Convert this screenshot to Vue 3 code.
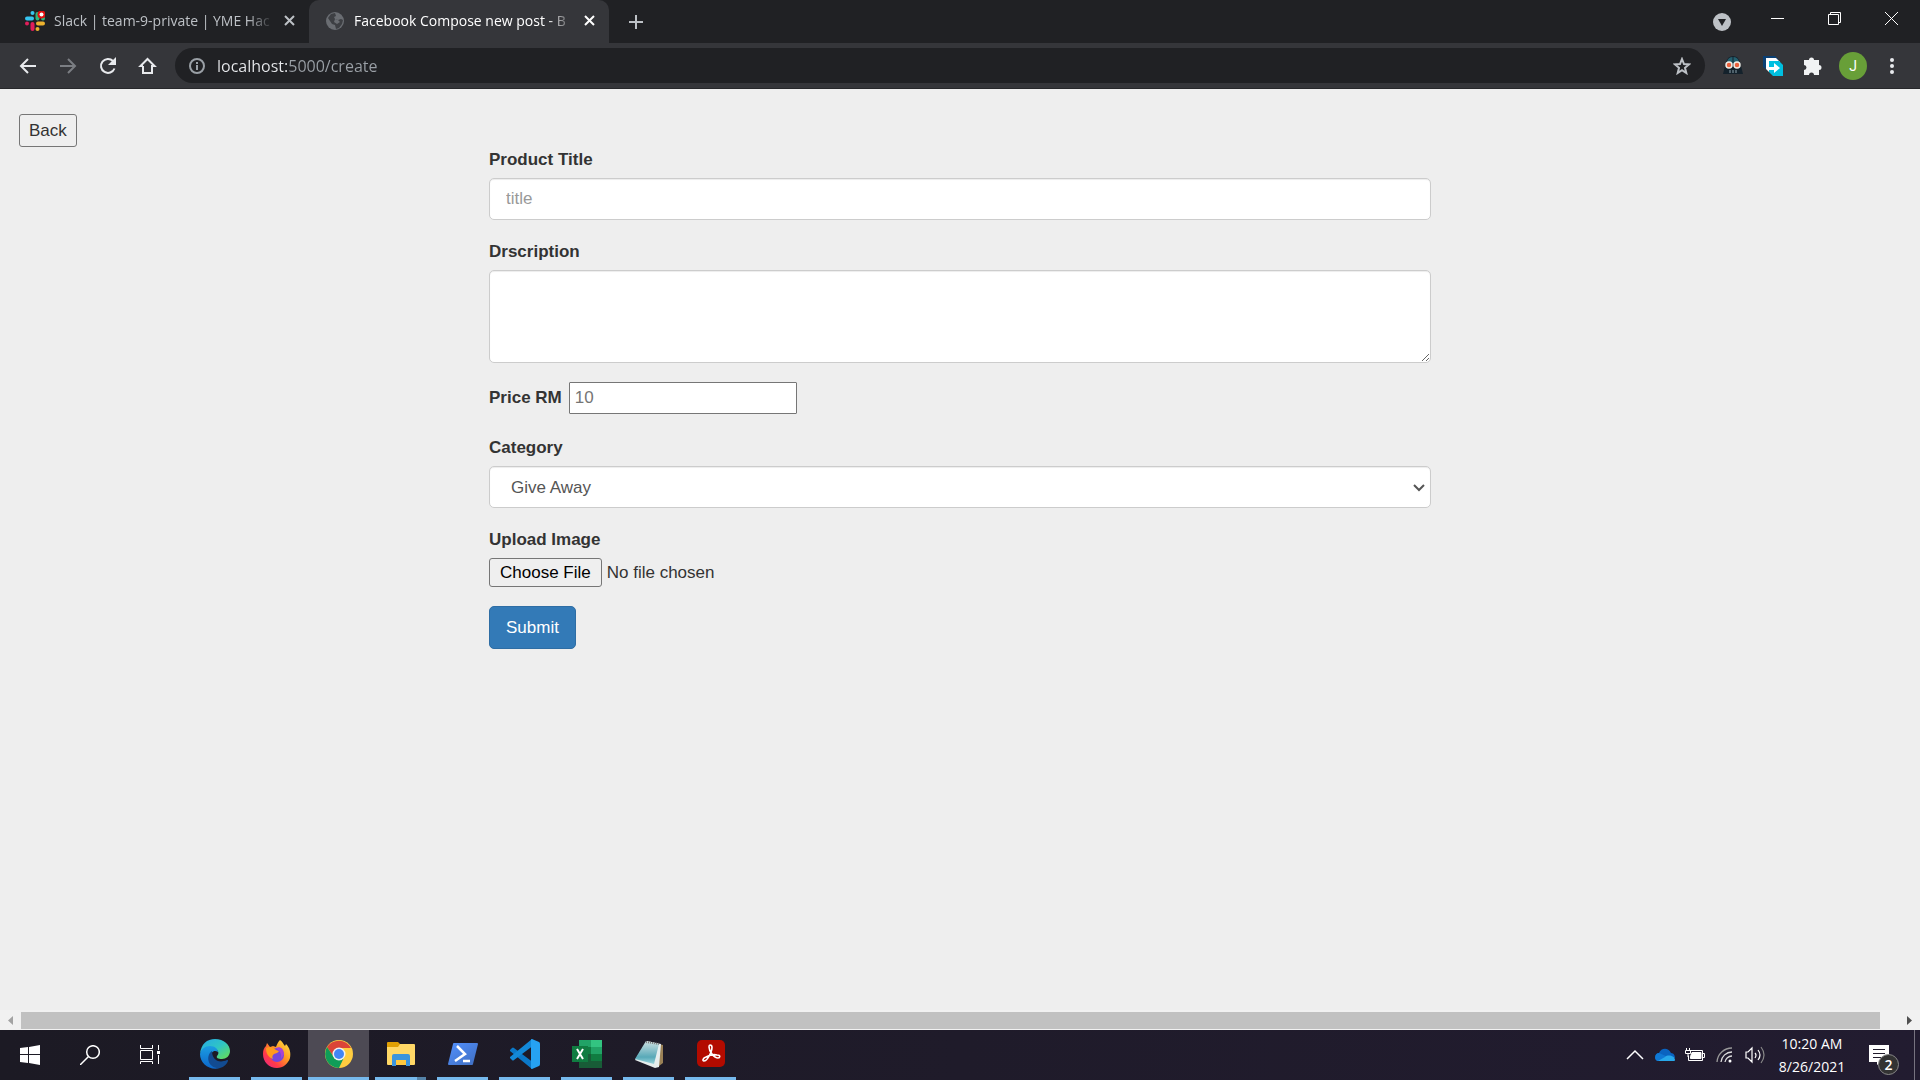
<template>
  <div class="desktop">
    <header class="browser">
      <div class="tab-strip">
        <div class="tab">
          <svg class="favicon" width="20" height="20" viewBox="0 0 20 20" aria-hidden="true">
            <g stroke-width="4" stroke-linecap="round" fill="none">
              <path d="M2 7.500h5" stroke="#36c5f0" />
              <path d="M7.500 2v0" stroke="#36c5f0" />
              <path d="M12.500 3v4.500" stroke="#2eb67d" />
              <path d="M18 7.500v0" stroke="#2eb67d" />
              <path d="M13 12.500h5" stroke="#ecb22e" />
              <path d="M12.500 18v0" stroke="#ecb22e" />
              <path d="M7.500 13v5" stroke="#e01e5a" />
              <path d="M2 12.500v0" stroke="#e01e5a" />
            </g>
            <circle cx="16.500" cy="3.500" r="4" fill="#e01010" />
            <circle cx="16.500" cy="3.500" r="2" fill="#fff" />
          </svg>
          <span class="tab-title">Slack | team-9-private | YME Hac</span>
          <button class="tab-close" type="button" aria-label="Close tab">
            <svg width="11" height="11" viewBox="0 0 11 11"><path d="M1 1l9 9M10 1l-9 9" stroke="currentColor" stroke-width="2" /></svg>
          </button>
        </div>
        <div class="tab active">
          <svg class="favicon" width="20" height="20" viewBox="0 0 20 20" aria-hidden="true">
            <circle cx="10" cy="10" r="9" fill="#6a6d72" />
            <path d="M3 7l3-4 4-1 1 3-2 1 1 2 3 1 3-1 2 1-1 4-3 4-3 1-1-4-3-1-2-3z" fill="#3d3f43" />
            <path d="M10 8l3 1 2 2-3 2-3-2z" fill="#6a6d72" />
          </svg>
          <span class="tab-title">Facebook Compose new post - B</span>
          <button class="tab-close" type="button" aria-label="Close tab">
            <svg width="11" height="11" viewBox="0 0 11 11"><path d="M1 1l9 9M10 1l-9 9" stroke="currentColor" stroke-width="2" /></svg>
          </button>
        </div>
        <button class="new-tab" type="button" aria-label="New tab">
          <svg width="16" height="16" viewBox="0 0 16 16"><path d="M8 1v14M1 8h14" stroke="currentColor" stroke-width="2" /></svg>
        </button>
        <div class="window-buttons">
          <button class="search-tabs" type="button" aria-label="Search tabs">
            <svg width="18" height="18" viewBox="0 0 18 18"><circle cx="9" cy="9" r="9" fill="#bdc1c6" /><path d="M5 6h8l-4 7z" fill="#202124" /></svg>
          </button>
          <button type="button" aria-label="Minimize">
            <svg width="13" height="13" viewBox="0 0 13 13"><path d="M0 6.500h13" stroke="#fff" /></svg>
          </button>
          <button type="button" aria-label="Restore">
            <svg width="13" height="13" viewBox="0 0 13 13" fill="none" stroke="#fff"><path d="M.5 2.500h10v10h-10zM2.500 2.500v-2h10v10h-2" /></svg>
          </button>
          <button type="button" aria-label="Close">
            <svg width="13" height="13" viewBox="0 0 13 13"><path d="M0 0l13 13M13 0L0 13" stroke="#fff" /></svg>
          </button>
        </div>
      </div>

      <div class="toolbar">
        <div class="nav-buttons">
          <button type="button" aria-label="Go back">
            <svg width="20" height="20" viewBox="0 0 20 20" fill="none" stroke="#e8eaed" stroke-width="2"><path d="M18 10H3M10 3l-7 7 7 7" /></svg>
          </button>
          <button type="button" aria-label="Go forward">
            <svg width="20" height="20" viewBox="0 0 20 20" fill="none" stroke="#7b7e83" stroke-width="2"><path d="M2 10h15M10 3l7 7-7 7" /></svg>
          </button>
          <button type="button" aria-label="Reload">
            <svg width="20" height="20" viewBox="0 0 20 20" fill="none"><path d="M16.500 12.500A7 7 0 1 1 15 5" stroke="#e8eaed" stroke-width="2" /><path d="M18 1v8h-8z" fill="#e8eaed" /></svg>
          </button>
          <button type="button" aria-label="Home">
            <svg width="20" height="20" viewBox="0 0 20 20" fill="none" stroke="#e8eaed" stroke-width="2"><path d="M5 10v7h9v-7h2.500l-7-7-7 7H5" /></svg>
          </button>
        </div>
        <div class="omnibox">
          <svg width="16" height="16" viewBox="0 0 16 16" fill="none" stroke="#9aa0a6" stroke-width="2"><circle cx="8" cy="8" r="7" /><path d="M8 7v5M8 4v2" /></svg>
          <input v-model="address" class="address" type="text" aria-label="Address">
          <button type="button" aria-label="Bookmark this page">
            <svg width="18" height="18" viewBox="0 0 18 18" fill="none" stroke="#bdc1c6" stroke-width="2"><path d="M9 2l2 5 5 .4-4 3.400 1.300 5.200L9 13.200 4.700 16 6 10.800 2 7.400 7 7z" /></svg>
          </button>
        </div>
        <div class="extensions">
          <button type="button" aria-label="Dark mode extension">
            <svg width="20" height="20" viewBox="0 0 20 20">
              <path d="M0 18l3-12Q5 0 10 0t7 6l3 12z" fill="#14222c" />
              <path d="M4 6Q5 1 10 1t6 5l-2 2H6z" fill="#24606f" />
              <path d="M10 0v9" stroke="#14222c" />
              <circle cx="6" cy="9" r="3" fill="#e8603c" stroke="#f2ede6" stroke-width="1.500" />
              <circle cx="14" cy="9" r="3" fill="#e8603c" stroke="#f2ede6" stroke-width="1.500" />
              <path d="M7 17v-3M10 17v-3M13 17v-3" stroke="#8aa0aa" />
            </svg>
          </button>
          <button type="button" aria-label="Share extension">
            <svg width="20" height="20" viewBox="0 0 20 20">
              <path d="M0 0h12l3 3v11H4L0 11z" fill="#0a3f73" />
              <path d="M3 2h10l4 4v10H6l-3-3z" fill="#fff" />
              <path d="M6 5h10l4 4v11H10l-4-4z" fill="#00bfe0" />
              <path d="M5 11h6V7l6 5-6 5v-3H5z" fill="#fff" />
            </svg>
          </button>
          <button type="button" aria-label="Extensions">
            <svg width="20" height="20" viewBox="0 0 20 20"><path d="M1 4h5a2.500 2.500 0 1 1 5 0h5v5a2.500 2.500 0 1 1 0 5v5h-5a2.500 2.500 0 0 0-5 0H1v-5a2.500 2.500 0 0 0 0-5z" fill="#f1f3f4" /></svg>
          </button>
          <button class="avatar" type="button">J</button>
          <button class="more" type="button" aria-label="Menu">
            <svg width="4" height="18" viewBox="0 0 4 18" fill="#e8eaed"><circle cx="2" cy="3" r="2" /><circle cx="2" cy="9" r="2" /><circle cx="2" cy="15" r="2" /></svg>
          </button>
        </div>
      </div>
    </header>

    <main class="page">
      <button class="back" type="button">Back</button>
      <form class="post-form" @submit.prevent>
        <div class="form-group">
          <label for="title">Product Title</label>
          <input id="title" v-model="form.title" class="form-control" type="text" placeholder="title">
        </div>
        <div class="form-group">
          <label for="description">Drscription</label>
          <textarea id="description" v-model="form.description" class="form-control"></textarea>
        </div>
        <div class="form-group price">
          <label for="price">Price RM</label>
          <input id="price" v-model="form.price" type="text" placeholder="10">
        </div>
        <div class="form-group">
          <label for="category">Category</label>
          <div class="select-wrap">
            <select id="category" v-model="form.category" class="form-control">
              <option v-for="c in categories" :key="c">{{ c }}</option>
            </select>
            <svg class="caret" width="12" height="8" viewBox="0 0 12 8" fill="none" aria-hidden="true"><path d="M1 1l5 5 5-5" stroke="#555" stroke-width="2" /></svg>
          </div>
        </div>
        <div class="form-group">
          <label for="image">Upload Image</label>
          <input id="image" class="file" type="file">
        </div>
        <button class="submit" type="submit">Submit</button>
      </form>
    </main>

    <div class="scrollbar" aria-hidden="true">
      <svg width="21" height="20" viewBox="0 0 21 20"><path d="M13 6v9l-5-4.500z" fill="#a3a3a3" /></svg>
      <div class="track"><div class="thumb" :style="{ width: thumbWidth + '%' }"></div></div>
      <svg width="21" height="20" viewBox="0 0 21 20"><path d="M8 6v9l5-4.500z" fill="#505050" /></svg>
    </div>

    <footer class="taskbar">
      <button class="system" type="button" aria-label="Start">
        <svg width="20" height="20" viewBox="0 0 20 20" fill="#fff"><path d="M0 3l8-1v7H0zM9 2l11-2v9H9zM0 10h8v8l-8-1zM9 10h11v10L9 18z" /></svg>
      </button>
      <button class="system" type="button" aria-label="Search">
        <svg width="20" height="20" viewBox="0 0 20 20" fill="none" stroke="#fff" stroke-width="1.500"><circle cx="13" cy="7" r="6.300" /><path d="M8.500 11.500L0 20" /></svg>
      </button>
      <button class="system" type="button" aria-label="Task View">
        <svg width="20" height="20" viewBox="0 0 20 20" fill="none" stroke="#fff"><path d="M.5 0v3.500h12V0M.5 5.500h12v9H.5zM.5 19v-2.500h12V19M18.500 0v5M18.500 10v9" /><path d="M17 6h3v3h-3z" fill="#fff" stroke="none" /></svg>
      </button>

      <div class="apps">
        <button class="app" type="button" aria-label="Microsoft Edge">
          <svg width="30" height="30" viewBox="0 0 30 30">
            <defs>
              <linearGradient id="edgeTop" x1="0" y1="0" x2="1" y2="1"><stop offset="0" stop-color="#26a9e8" /><stop offset=".5" stop-color="#2fc5c4" /><stop offset="1" stop-color="#6be04c" /></linearGradient>
              <linearGradient id="edgeLeft" x1="0" y1="0" x2="0" y2="1"><stop offset="0" stop-color="#1b9de2" /><stop offset="1" stop-color="#0d66c9" /></linearGradient>
            </defs>
            <path d="M0 15C1 5 7 0 15 0c9 0 15 6 15 12 0 5-4 8-8 8-4 0-6-1-5-3 3-3 1-7-4-8C6 8 1 11 0 15z" fill="url(#edgeTop)" />
            <path d="M0 15C1 10 5 7 10 7c5 0 8 3 8 6-5-3-8 2-7 6 1 6 5 9 9 10C10 32 0 25 0 15z" fill="url(#edgeLeft)" />
            <path d="M12 12c-7 5-4 18 8 17 4-1 7-4 8-7 0-1 0-1-1-1-9 4-15-1-15-9z" fill="#124b91" />
          </svg>
        </button>
        <button class="app" type="button" aria-label="Firefox">
          <svg width="30" height="30" viewBox="0 0 30 30">
            <defs>
              <linearGradient id="fox" x1="1" y1="0" x2="0" y2="1"><stop offset="0" stop-color="#fff04a" /><stop offset=".4" stop-color="#ff9a22" /><stop offset=".7" stop-color="#ff3a48" /><stop offset="1" stop-color="#e5228f" /></linearGradient>
            </defs>
            <path d="M18 1c3 2 3 4 5 6l1-2c4 4 5 9 4 14-2 6-7 10-13 10C7 29 1 23 1 15c0-4 1-6 3-8l1-3 3 4 3-1 3 1c1-3 2-5 4-7z" fill="url(#fox)" />
            <circle cx="15" cy="16" r="7" fill="#7446db" />
            <path d="M4 9c4-2 7-1 10 2l3 1c-1 2-3 2-5 3-2 2-2 3-1 5-5-2-7-6-7-11z" fill="#ff9a1c" />
            <path d="M14 9c4-2 8 1 8 6l-3 5c1-5-1-8-5-11z" fill="#a743d6" />
          </svg>
        </button>
        <button class="app current" type="button" aria-label="Google Chrome">
          <svg width="28" height="28" viewBox="0 0 28 28">
            <circle cx="14" cy="14" r="14" fill="#ffcd40" />
            <path d="M2 7a14 14 0 0 1 24 1H14a6 6 0 0 0-5.200 9z" fill="#db4437" />
            <path d="M2 7l6.800 10a6 6 0 0 0 10.400 0L14 28A14 14 0 0 1 2 7z" fill="#0f9d58" />
            <circle cx="14" cy="14" r="6.500" fill="#f1f1f1" />
            <circle cx="14" cy="14" r="5" fill="#4285f4" />
          </svg>
        </button>
        <button class="app stacked" type="button" aria-label="File Explorer">
          <svg width="28" height="24" viewBox="0 0 28 24">
            <path d="M0 1q0-1 1-1h10l2 2v4H0z" fill="#e0a004" />
            <path d="M0 5h11l2-3h14q1 0 1 1v19q0 1-1 1H1q-1 0-1-1z" fill="#ffd866" />
            <path d="M9 17h10v6H9z" fill="#ffc73d" />
            <path d="M5 24V14q0-2 2-2h14q2 0 2 2v10h-4v-6H9v6z" fill="#3b94dd" />
          </svg>
        </button>
        <button class="app" type="button" aria-label="PowerShell">
          <svg width="30" height="24" viewBox="0 0 30 24">
            <defs><linearGradient id="shell" x1="0" y1="0" x2="1" y2="1"><stop offset="0" stop-color="#5391fe" /><stop offset="1" stop-color="#3e6dbf" /></linearGradient></defs>
            <path d="M6 1h23q1 0 1 1l-5 20q0 1-1 1H1q-1 0-1-1L5 2q0-1 1-1z" fill="url(#shell)" />
            <path d="M9 4l8 8-10 7M15 19h7" fill="none" stroke="#fff" stroke-width="2.500" />
          </svg>
        </button>
        <button class="app" type="button" aria-label="Visual Studio Code">
          <svg width="30" height="30" viewBox="0 0 30 30">
            <path d="M0 11l2-2q1-1 2 0l20 15-2 6L0 12z" fill="#0b78c8" />
            <path d="M0 19l2 2q1 1 2 0L24 6l-2-6L0 18z" fill="#1389d8" />
            <path d="M22 0l7 3q1 .5 1 2v20q0 1.500-1 2l-7 3q-1 0-1-1V1q0-1 1-1z" fill="#26a2f2" />
          </svg>
        </button>
        <button class="app" type="button" aria-label="Excel">
          <svg width="30" height="28" viewBox="0 0 30 28">
            <path d="M7 0h12v7H7z" fill="#21a366" /><path d="M19 0h11v7H19z" fill="#33c481" />
            <path d="M7 7h12v7H7z" fill="#107c41" /><path d="M19 7h11v7H19z" fill="#21a366" />
            <path d="M7 14h23v7H7z" fill="#107c41" /><path d="M7 14h12v14H7zM19 21h11v7H19z" fill="#185c37" />
            <path d="M0 6h16v16H0z" fill="#107c41" />
            <path d="M5 9l6 10M11 9L5 19" stroke="#fff" stroke-width="2" />
          </svg>
        </button>
        <button class="app" type="button" aria-label="Notepad">
          <svg width="28" height="28" viewBox="0 0 28 28">
            <defs><linearGradient id="pad" x1="0" y1="0" x2="0" y2="1"><stop offset="0" stop-color="#cde0e2" /><stop offset=".7" stop-color="#58a9b8" /><stop offset="1" stop-color="#9cd6df" /></linearGradient></defs>
            <path d="M24 4l4 1v18l-4 3z" fill="#9a8156" />
            <path d="M12 1l14 3-2 23-4 1L0 20z" fill="#e6eeee" />
            <path d="M11 1l13 3-5 20L0 19z" fill="url(#pad)" />
            <path d="M11 2l13 2" stroke="#777" stroke-width="2" stroke-dasharray="1 1" />
          </svg>
        </button>
        <button class="app" type="button" aria-label="Adobe Acrobat">
          <svg width="28" height="28" viewBox="0 0 28 28">
            <rect width="28" height="27" rx="5" fill="#b30b00" />
            <path d="M13 5c3 0 2 4 1 7-2 5-4 9-7 9-2 0-1-3 2-4 4-2 8-3 11-2 4 0 3 3 1 3-4 0-9-7-9-11 0-1 0-2 1-2z" fill="none" stroke="#fff" stroke-width="1.600" />
          </svg>
        </button>
      </div>

      <div class="tray">
        <button type="button" aria-label="Show hidden icons">
          <svg width="20" height="20" viewBox="0 0 20 20" fill="none" stroke="#fff" stroke-width="1.500"><path d="M2 14l8-8 8 8" /></svg>
        </button>
        <button type="button" aria-label="OneDrive">
          <svg width="20" height="20" viewBox="0 0 20 20"><path d="M1 15c-2-4 0-7 3-7 2-5 9-6 12 0 3 0 4 3 4 5z" fill="#0a63c0" /><path d="M2 16c-4-3-1-8 2-8l9 4-8 4z" fill="#0f78d4" /><path d="M3 16l7-4c3-3 10-1 10 3 0 1-1 1-2 1z" fill="#28a8ea" /></svg>
        </button>
        <button type="button" aria-label="Battery">
          <svg width="20" height="20" viewBox="0 0 20 20" fill="none" stroke="#fff"><path d="M5 5.500h12.500v10h-14v-5M18 8.500h1.500v4H18M1.500 3v2M4.500 3v2M.5 5.500h5v3h-5zM3 8v4" /><path d="M7 7.500h9v6H5.500v-2z" fill="#fff" /></svg>
        </button>
        <button type="button" aria-label="Network">
          <svg width="20" height="20" viewBox="0 0 20 20" fill="none" stroke="#ddd" stroke-width="1.300"><path d="M2 17A15 15 0 0 1 17 3" stroke="#999" /><path d="M6 17A11 11 0 0 1 17 7M10 17a7 7 0 0 1 7-6" /><circle cx="15" cy="16" r="1.500" fill="#fff" stroke="none" /></svg>
        </button>
        <button type="button" aria-label="Volume">
          <svg width="20" height="20" viewBox="0 0 20 20" fill="none" stroke="#fff" stroke-width="1.200"><path d="M1 7h2l4-4v14l-4-4H1zM10 8q2 2 0 5M13 5q4 5 0 10" /><path d="M16 2q6 8 0 16" stroke="#888" /></svg>
        </button>
        <div class="clock">
          <span>10:20 AM</span>
          <span>8/26/2021</span>
        </div>
        <button class="notifications" type="button" aria-label="Notifications">
          <svg width="20" height="20" viewBox="0 0 20 20"><path d="M0 0h20v17h-8l-4 3v-3H0z" fill="#fff" /><path d="M4 4.500h12M4 8.500h12M4 12.500h8" stroke="#211c2c" /></svg>
          <span class="badge">2</span>
        </button>
        <button class="show-desktop" type="button" aria-label="Show desktop"></button>
      </div>
    </footer>
  </div>
</template>

<script setup>
import { ref, reactive } from 'vue'

const address = ref('localhost:5000/create')
const categories = ['Give Away', 'Sell']
const thumbWidth = ref(99)

const form = reactive({
  title: '',
  description: '',
  price: '',
  category: 'Give Away'
})
</script>

<style>
body {
  margin: 0;
}
</style>

<style scoped>
* {
  box-sizing: border-box;
}

.desktop {
  display: flex;
  flex-direction: column;
  min-height: 100vh;
  background: #eee;
  font-family: "Open Sans", "Noto Sans", sans-serif;
}

.browser button,
.taskbar button {
  display: flex;
  align-items: center;
  justify-content: center;
  padding: 0;
  border: 0;
  background: none;
  color: inherit;
  font: inherit;
}

/* tabs */
.tab-strip {
  display: flex;
  height: 43px;
  padding-left: 9px;
  background: #202124;
  color: #bdc1c6;
}

.tab {
  display: flex;
  align-items: center;
  width: 300px;
  padding: 0 14px 2px 16px;
  font-size: 14px;
}

.tab.active {
  background: #35363a;
  border-radius: 10px 10px 0 0;
  color: #fff;
}

.favicon {
  flex: none;
  margin-right: 9px;
}

.tab-title {
  flex: 1;
  white-space: nowrap;
  mask-image: linear-gradient(to right, #000 88%, transparent);
}

.tab-close {
  flex: none;
  width: 11px;
  margin-left: 10px;
}

.new-tab {
  width: 54px;
}

.window-buttons {
  display: flex;
  margin-left: auto;
}

.window-buttons button {
  width: 57px;
  height: 37px;
}

.window-buttons .search-tabs {
  width: 54px;
  height: 43px;
}

/* toolbar */
.toolbar {
  display: flex;
  align-items: center;
  height: 46px;
  padding-right: 20px;
  border-bottom: 1px solid #27282b;
  background: #35363a;
}

.nav-buttons {
  display: flex;
  padding: 0 7px 0 8px;
}

.nav-buttons button {
  width: 40px;
  height: 36px;
}

.omnibox {
  display: flex;
  flex: 1;
  align-items: center;
  height: 35px;
  padding: 0 14px;
  border-radius: 18px;
  background: #202124;
}

.address {
  flex: 1;
  margin: 0 12px;
  padding: 0;
  border: 0;
  outline: 0;
  background: linear-gradient(to right, #e8eaed 71px, #9aa0a6 71px);
  background-clip: text;
  color: transparent;
  font-family: inherit;
  font-size: 16px;
  line-height: 24px;
}

.extensions {
  display: flex;
  align-items: center;
  gap: 20px;
  padding-left: 18px;
}

.browser .avatar {
  width: 28px;
  height: 28px;
  margin: 0 -3px 0 -4px;
  border-radius: 50%;
  background: #689f38;
  color: #fff;
  font-family: Roboto, sans-serif;
  font-size: 14px;
}

.more {
  width: 16px;
}

/* page */
.page {
  flex: 1;
  padding: 25px 19px;
  color: #333;
  font-family: "Liberation Sans", Arial, sans-serif;
  font-size: 17px;
  line-height: 25px;
}

.page button,
.page input,
.page select,
.page textarea {
  font-family: inherit;
  font-size: inherit;
  line-height: inherit;
}

.back {
  display: block;
  padding: 3px 9px;
  border: 1px solid #767676;
  border-radius: 3px;
  background: #efefef;
  color: #333;
}

.post-form {
  width: 100%;
  max-width: 942px;
  margin: 0 auto;
}

.form-group {
  margin-bottom: 19px;
}

label {
  display: inline-block;
  margin-bottom: 6px;
  font-weight: bold;
}

.form-control {
  display: block;
  width: 100%;
  height: 42px;
  padding: 7px 16px;
  border: 1px solid #ccc;
  border-radius: 5px;
  background: #fff;
  box-shadow: inset 0 1px 1px rgba(0, 0, 0, 0.075);
  color: #555;
}

.form-control::placeholder {
  color: #999;
}

textarea.form-control {
  height: 93px;
}

.price label {
  margin-right: 7px;
}

.price input {
  width: 228px;
  height: 32px;
  padding: 2px 5px;
  border: 1px solid #767676;
  border-radius: 1px;
}

.select-wrap {
  position: relative;
}

select.form-control {
  padding-left: 21px;
  appearance: none;
}

.caret {
  position: absolute;
  top: 18px;
  right: 6px;
  pointer-events: none;
}

.file {
  display: block;
  height: 29px;
}

.file::file-selector-button {
  height: 29px;
  margin-right: 5px;
  padding: 0 10px;
  border: 1px solid #767676;
  border-radius: 3px;
  background: #efefef;
  color: #000;
  font-family: inherit;
  font-size: inherit;
}

.submit {
  padding: 8px 16px;
  border: 1px solid #2e6da4;
  border-radius: 5px;
  background: #337ab7;
  color: #fff;
}

/* horizontal scrollbar */
.scrollbar {
  display: flex;
  height: 20px;
  background: #f1f1f1;
}

.track {
  flex: 1;
  padding: 2px 0 1px;
}

.thumb {
  height: 17px;
  background: #c1c1c1;
}

/* taskbar */
.taskbar {
  display: flex;
  height: 50px;
  background: linear-gradient(to right, #1c1a24, #221c30);
  color: #fff;
}

.system {
  width: 60px;
}

.apps {
  display: flex;
  gap: 11px;
  padding-left: 9px;
}

.taskbar .app {
  width: 51px;
  border-bottom: 3px solid #76b9ed;
}

.taskbar .app.current {
  width: 61px;
  margin: 0 -5px;
  background: #4d4a54;
}

.taskbar .app.stacked {
  border-image: linear-gradient(to right, #76b9ed 40px, #5583a8 40px) 3;
}

.tray {
  display: flex;
  align-items: center;
  margin-left: auto;
}

.tray button {
  width: 30px;
  height: 50px;
}

.clock {
  display: flex;
  flex-direction: column;
  align-items: center;
  width: 84px;
  margin-right: 4px;
  font-size: 14px;
  line-height: 23px;
}

.tray .notifications {
  position: relative;
  width: 40px;
  margin: 0 15px 0 1px;
}

.badge {
  position: absolute;
  top: 24px;
  right: 0;
  width: 21px;
  height: 21px;
  border: 1px solid #888;
  border-radius: 50%;
  background: #333;
  font-size: 14px;
  font-weight: 600;
  line-height: 19px;
  text-align: center;
}

.tray .show-desktop {
  width: 6px;
  border-left: 1px solid #77737f;
}
</style>
